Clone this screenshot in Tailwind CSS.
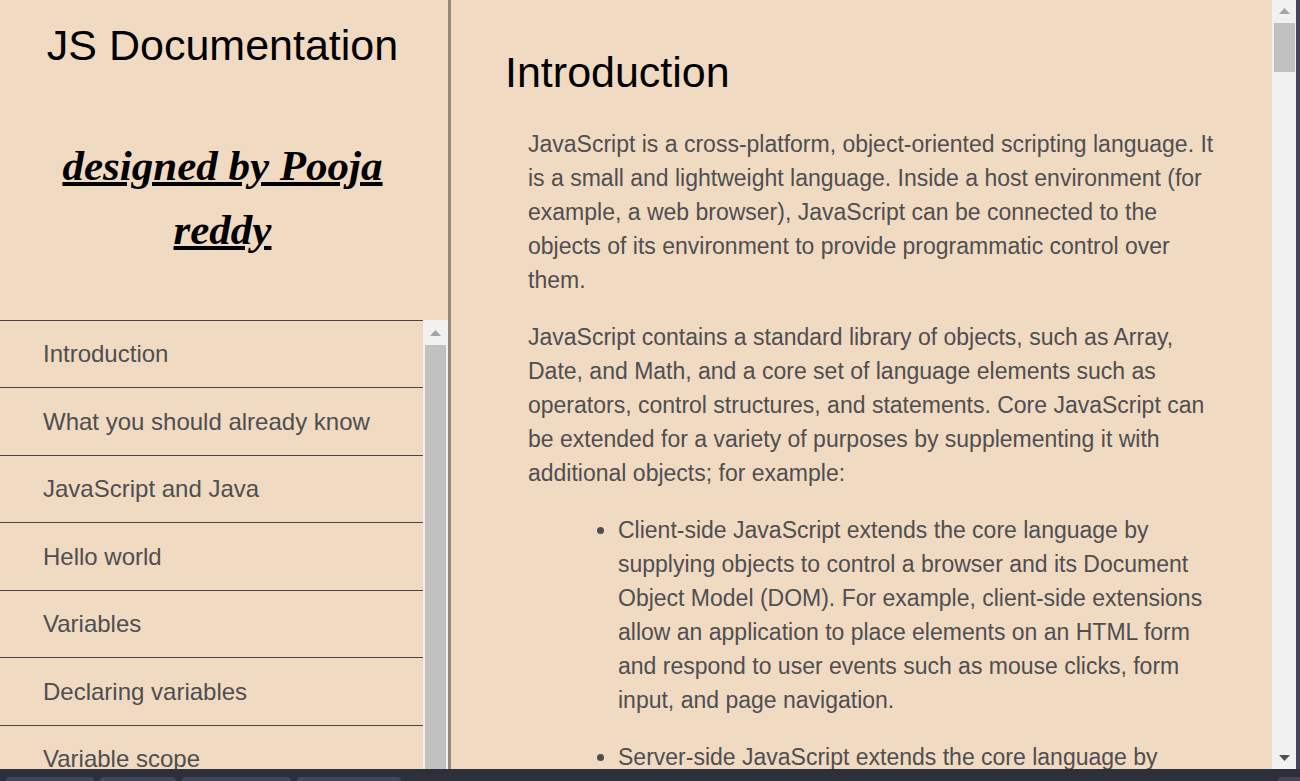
<!DOCTYPE html>
<html lang="en">
<head>
<meta charset="utf-8">
<title>JS Documentation</title>
<script src="https://cdn.jsdelivr.net/npm/@tailwindcss/browser@4"></script>
</head>
<body class="h-screen flex flex-col overflow-hidden bg-[#f0dac2] font-['Liberation_Sans',Arial,sans-serif] text-[#4f4e51]">
<div class="flex flex-1 min-h-0">
  <nav class="w-[451px] shrink-0 flex flex-col border-r-3 border-[#938a7b] min-h-0" aria-label="Documentation">
    <header class="h-80 shrink-0 pl-6 pr-[27px] text-center text-black">
      <h1 class="pt-[13px] text-[43px] leading-[64px]">JS Documentation</h1>
      <p class="mt-[57px] text-[43px] leading-[64px] font-bold italic underline decoration-4 font-['Liberation_Serif','Times_New_Roman',serif]">designed by Pooja reddy</p>
    </header>
    <div class="flex flex-1 min-h-0">
      <ul class="flex-1 overflow-hidden text-2xl">
        <li class="h-[67px] border-t border-[#4d4544] leading-[66px]"><a class="block pl-[43px]" href="#introduction">Introduction</a></li>
        <li class="h-[68px] border-t border-[#4d4544] leading-[68px]"><a class="block pl-[43px]" href="#know">What you should already know</a></li>
        <li class="h-[67px] border-t border-[#4d4544] leading-[66px]"><a class="block pl-[43px]" href="#java">JavaScript and Java</a></li>
        <li class="h-[68px] border-t border-[#4d4544] leading-[68px]"><a class="block pl-[43px]" href="#hello">Hello world</a></li>
        <li class="h-[67px] border-t border-[#4d4544] leading-[66px]"><a class="block pl-[43px]" href="#variables">Variables</a></li>
        <li class="h-[68px] border-t border-[#4d4544] leading-[68px]"><a class="block pl-[43px]" href="#declaring">Declaring variables</a></li>
        <li class="h-[67px] border-t border-[#4d4544] leading-[66px]"><a class="block pl-[43px]" href="#scope">Variable scope</a></li>
      </ul>
      <div class="w-[25px] shrink-0 flex flex-col bg-[#f1f1f1] px-[2px]" aria-hidden="true">
        <svg class="h-[25px] w-[21px] shrink-0" viewBox="0 0 21 25"><path d="M5 16h11L10.500 10z" fill="#a3a3a3"/></svg>
        <div class="flex-1 bg-[#c1c1c1]"></div>
      </div>
    </div>
  </nav>
  <main class="flex-1 min-w-0 overflow-hidden pl-[54px] pr-[52px] pt-10">
    <section id="introduction">
      <h2 class="text-[43px] leading-[64px] text-black">Introduction</h2>
      <div class="pl-[23px] pt-[23px] text-[23px] leading-[34px]">
        <p>JavaScript is a cross-platform, object-oriented scripting language. It is a small and lightweight language. Inside a host environment (for example, a web browser), JavaScript can be connected to the objects of its environment to provide programmatic control over them.</p>
        <p class="mt-[23px]">JavaScript contains a standard library of objects, such as Array, Date, and Math, and a core set of language elements such as operators, control structures, and statements. Core JavaScript can be extended for a variety of purposes by supplementing it with additional objects; for example:</p>
        <ul class="list-disc pl-[90px] mt-[23px]">
          <li>Client-side JavaScript extends the core language by supplying objects to control a browser and its Document Object Model (DOM). For example, client-side extensions allow an application to place elements on an HTML form and respond to user events such as mouse clicks, form input, and page navigation.</li>
          <li class="mt-[23px]">Server-side JavaScript extends the core language by</li>
        </ul>
      </div>
    </section>
  </main>
  <div class="w-6 shrink-0 flex flex-col bg-[#f1f1f1] px-[2px]" aria-hidden="true">
    <svg class="h-[23px] w-[21px] shrink-0" viewBox="0 0 21 23"><path d="M5 14h11L10.500 8z" fill="#a3a3a3"/></svg>
    <div class="h-[49px] w-[21px] bg-[#c1c1c1]"></div>
    <svg class="mt-auto h-[23px] w-[21px] shrink-0" viewBox="0 0 21 23"><path d="M5 9h11L10.500 15z" fill="#505050"/></svg>
  </div>
  <div class="w-1 shrink-0 bg-[#444559]"></div>
</div>
<footer class="h-3 shrink-0 flex items-end gap-1.5 bg-[#2d2f3a] pl-1.5 overflow-hidden" aria-hidden="true">
  <div class="h-1 w-[88px] rounded-t-sm bg-[#444559]"></div>
  <div class="h-1 w-[76px] rounded-t-sm bg-[#444559]"></div>
  <div class="h-1 w-[109px] rounded-t-sm bg-[#444559]"></div>
  <div class="h-1 w-[104px] rounded-t-sm bg-[#444559]"></div>
  <div class="ml-auto h-1 w-[22px] rounded-tl-sm bg-[#444559]"></div>
</footer>
</body>
</html>
